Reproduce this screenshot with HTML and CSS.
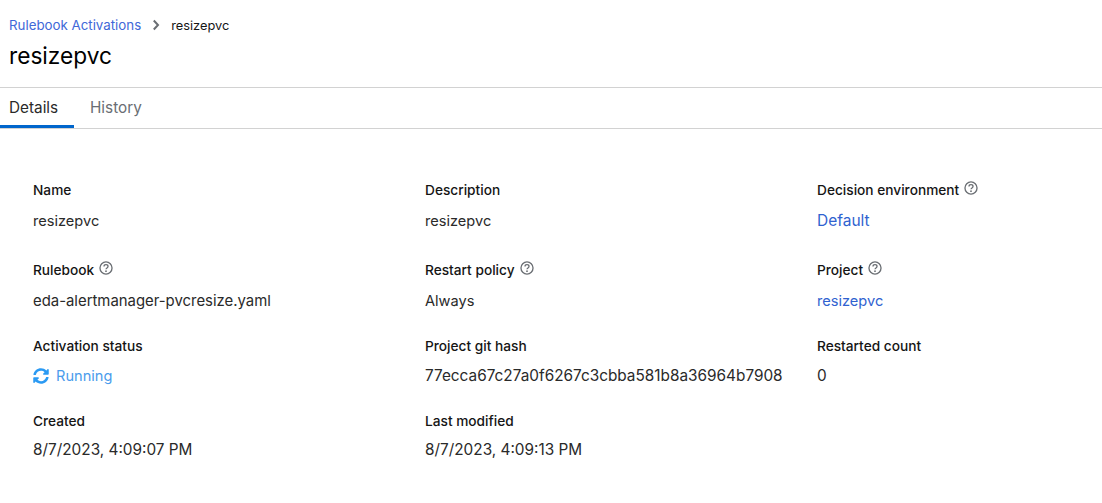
FILE: index.html
```html
<!DOCTYPE html>
<html lang="en">

<head>
    <meta charset="UTF-8">
    <meta name="viewport" content="width=device-width, initial-scale=1.0">
    <title>resizepvc</title>
    <link rel="stylesheet" href="styles.css">
</head>

<body>
    <svg class="sprites" width="0" height="0" aria-hidden="true">
        <symbol id="help" viewBox="0 0 16 16">
            <circle cx="8" cy="8" r="6.9" fill="none" stroke="currentColor" stroke-width="1.5" />
            <path d="M5.700 6.300c0-1.300 1-2.100 2.300-2.100s2.300.8 2.300 2c0 1.800-2.300 1.700-2.300 3.300" fill="none" stroke="currentColor" stroke-width="1.500" />
            <circle cx="8" cy="11.700" r="1" fill="currentColor" />
        </symbol>
    </svg>

    <header class="page-header">
        <nav class="breadcrumb">
            <a href="#">Rulebook Activations</a>
            <svg class="crumb-sep" viewBox="0 0 8 12" width="8" height="12"><path d="M1.800 1.500 6 6l-4.200 4.500" fill="none" stroke="currentColor" stroke-width="2" /></svg>
            <span>resizepvc</span>
        </nav>
        <h1>resizepvc</h1>
    </header>

    <div class="tabs">
        <div class="tab active">Details</div>
        <div class="tab">History</div>
    </div>

    <main class="details">
        <div class="item row-1">
            <div class="label">Name</div>
            <div class="value">resizepvc</div>
        </div>
        <div class="item row-1">
            <div class="label">Description</div>
            <div class="value">resizepvc</div>
        </div>
        <div class="item row-1">
            <div class="label">Decision environment <svg class="help"><use href="#help" /></svg></div>
            <div class="value"><a class="wide" href="#">Default</a></div>
        </div>

        <div class="item row-2">
            <div class="label">Rulebook <svg class="help"><use href="#help" /></svg></div>
            <div class="value filename">eda-alertmanager-pvcresize.yaml</div>
        </div>
        <div class="item row-2">
            <div class="label">Restart policy <svg class="help"><use href="#help" /></svg></div>
            <div class="value">Always</div>
        </div>
        <div class="item row-2">
            <div class="label">Project <svg class="help"><use href="#help" /></svg></div>
            <div class="value"><a href="#">resizepvc</a></div>
        </div>

        <div class="item row-3">
            <div class="label">Activation status</div>
            <div class="value status">
                <svg class="sync" viewBox="0 0 512 512" width="16" height="16">
                    <path fill="currentColor" d="M370.700 133.300C339.500 104 298.900 88 255.800 88c-77.500.1-144.300 53.200-162.800 126.900-1.300 5.400-6.100 9.200-11.700 9.200H24.100c-7.500 0-13.200-6.800-11.800-14.200C33.900 94.900 134.800 8 256 8c66.400 0 126.800 26.100 171.300 68.700L463 41c15.100-15.100 41-4.400 41 17v134c0 13.300-10.700 24-24 24H346c-21.400 0-32.100-25.900-17-41l41.700-41.700zM32 296h134c21.400 0 32.100 25.900 17 41l-41.700 41.700c31.200 29.300 71.800 45.300 114.900 45.300 77.400-.1 144.300-53.100 162.800-126.800 1.300-5.400 6.100-9.200 11.700-9.200h57.300c7.500 0 13.200 6.800 11.800 14.200C478.100 417.100 377.200 504 256 504c-66.400 0-126.800-26.100-171.300-68.700L49 471c-15.100 15.100-41 4.400-41-17V320c0-13.300 10.700-24 24-24z" />
                </svg>
                Running
            </div>
        </div>
        <div class="item row-3">
            <div class="label">Project git hash</div>
            <div class="value numeric">77ecca67c27a0f6267c3cbba581b8a36964b7908</div>
        </div>
        <div class="item row-3">
            <div class="label">Restarted count</div>
            <div class="value numeric">0</div>
        </div>

        <div class="item row-4">
            <div class="label">Created</div>
            <div class="value numeric">8/7/2023, 4:09:07 PM</div>
        </div>
        <div class="item row-4">
            <div class="label">Last modified</div>
            <div class="value numeric">8/7/2023, 4:09:13 PM</div>
        </div>
    </main>
</body>

</html>
```

FILE: styles.css
```css
body {
    font-family: 'Inter', sans-serif;
    background-color: #fff;
    color: #151515;
    margin: 0;
    padding: 0;
}

a {
    color: #2f62d0;
    text-decoration: none;
}

.sprites {
    display: block;
    height: 0;
}

.page-header {
    height: 88px;
    box-sizing: border-box;
    padding: 15px 9px 0;
    border-bottom: 1px solid #d2d2d2;
}

.breadcrumb {
    display: flex;
    align-items: center;
    gap: 11px;
    height: 20px;
    font-size: 12.800px;
}

.breadcrumb a {
    font-size: 13.300px;
    color: #4168d8;
}

.crumb-sep {
    color: #6a6e73;
}

h1 {
    margin: 8px 0 0;
    font-size: 22.700px;
    font-weight: 400;
    line-height: 26px;
    color: #000;
}

.tabs {
    display: flex;
    height: 41px;
    box-sizing: border-box;
    border-bottom: 1px solid #d2d2d2;
}

.tab {
    padding: 10px 16px 0;
    font-size: 15.300px;
    color: #6a6e73;
}

.tab.active {
    width: 74px;
    box-sizing: border-box;
    padding-left: 9px;
    padding-right: 0;
    height: 40px;
    color: #2a2a2a;
    border-bottom: 3px solid #06c;
}

.details {
    display: grid;
    grid-template-columns: 392px 392px 1fr;
    padding: 51px 0 0 33px;
}

.item {
    display: flex;
    flex-direction: column;
}

.row-1 { height: 80px; }
.row-2 { height: 76px; }
.row-3 { height: 75px; }

.label {
    display: flex;
    align-items: center;
    gap: 5px;
    height: 20px;
    font-size: 13.700px;
    font-weight: 500;
}

.value {
    margin-top: 10px;
    height: 20px;
    line-height: 20px;
    font-size: 14.600px;
    color: #2a2a2a;
}

.row-1 .value,
.row-2 .value {
    margin-top: 11px;
}

.row-4 .value {
    margin-top: 9px;
}

.numeric {
    font-size: 15.350px;
}

.filename {
    font-size: 14.900px;
}

.wide {
    font-size: 15.500px;
}

.help {
    width: 14px;
    height: 14px;
    color: #6a6e73;
    margin-top: -5px;
}

.value.status {
    display: flex;
    align-items: center;
    gap: 7px;
    color: #4a9cec;
}

.sync {
    color: #2b9af3;
}
```
